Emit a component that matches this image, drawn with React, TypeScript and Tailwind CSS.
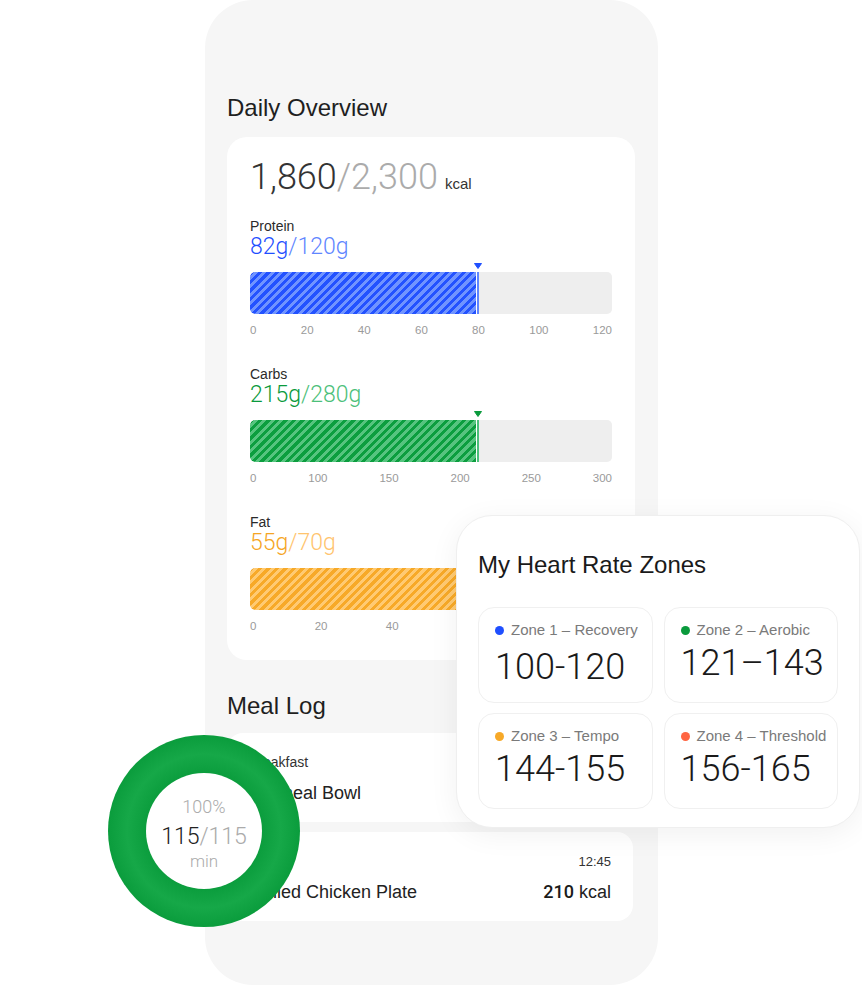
import React from "react";

type Macro = {
  label: string;
  value: string;
  total: string;
  valueCls: string;
  totalCls: string;
  stripeCls: string;
  lineCls: string;
  tri: string;
  fill: number;
  ticks: string[];
};

const macros: Macro[] = [
  {
    label: "Protein",
    value: "82g",
    total: "/120g",
    valueCls: "text-[#1f4fff]",
    totalCls: "text-[#5f86ff]",
    stripeCls:
      "bg-[image:repeating-linear-gradient(135deg,#2352ff_0px,#2352ff_3px,#7094ff_3px,#7094ff_6px)]",
    lineCls: "bg-[#5f86ff]",
    tri: "#1f4fff",
    fill: 226,
    ticks: ["0", "20", "40", "60", "80", "100", "120"],
  },
  {
    label: "Carbs",
    value: "215g",
    total: "/280g",
    valueCls: "text-[#0a9a3c]",
    totalCls: "text-[#4cc07a]",
    stripeCls:
      "bg-[image:repeating-linear-gradient(135deg,#0c9e3f_0px,#0c9e3f_3px,#56c47f_3px,#56c47f_6px)]",
    lineCls: "bg-[#4cc07a]",
    tri: "#0a9a3c",
    fill: 226,
    ticks: ["0", "100", "150", "200", "250", "300"],
  },
  {
    label: "Fat",
    value: "55g",
    total: "/70g",
    valueCls: "text-[#f5a524]",
    totalCls: "text-[#ffc46e]",
    stripeCls:
      "bg-[image:repeating-linear-gradient(135deg,#f7a928_0px,#f7a928_3px,#ffca72_3px,#ffca72_6px)]",
    lineCls: "bg-[#ffc46e]",
    tri: "#f5a524",
    fill: 250,
    ticks: ["0", "20", "40", "60", "70", "80"],
  },
];

function MacroBlock({ m }: { m: Macro }) {
  return (
    <div className="flex flex-col">
      <div className="text-[14px] leading-[16px] text-[#2a2a2a]">{m.label}</div>
      <div className="[font-family:Roboto,sans-serif] font-light text-[23px] leading-[26px]">
        <span className={m.valueCls}>{m.value}</span>
        <span className={m.totalCls}>{m.total}</span>
      </div>
      <div className="relative mt-[12px] h-[42px]">
        <div className="flex h-full w-full overflow-hidden rounded-[5px] bg-[#eeeeee]">
          <div className={`h-full rounded-l-[5px] ${m.stripeCls}`} style={{ width: m.fill }} />
          <div className="h-full w-[1px] bg-white" />
          <div className={`h-full w-[2px] ${m.lineCls}`} />
        </div>
        <svg
          className="absolute top-[-9px]"
          style={{ left: m.fill - 2 }}
          width="8"
          height="6"
          viewBox="0 0 8 6"
        >
          <path d="M0.5 0.5H7.5L4 5.5Z" fill={m.tri} stroke={m.tri} strokeLinejoin="round" />
        </svg>
      </div>
      <div className="mt-[9px] flex justify-between text-[11.5px] leading-[14px] text-[#9a9a9a]">
        {m.ticks.map((t) => (
          <span key={t}>{t}</span>
        ))}
      </div>
    </div>
  );
}

function MealCard({
  label,
  time,
  name,
  kcal,
}: {
  label: string;
  time: string;
  name: string;
  kcal: string;
}) {
  return (
    <div className="rounded-[16px] bg-white pl-[22px] pr-[22px] pt-[20px] pb-[18px]">
      <div className="flex items-baseline justify-between leading-[18px] text-[#333]">
        <span className="text-[14px]">{label}</span>
        <span className="text-[13px]">{time}</span>
      </div>
      <div className="mt-[10px] flex items-baseline justify-between text-[18px] leading-[22px] text-[#222]">
        <span>{name}</span>
        <span>
          <span className="[font-family:Roboto,sans-serif] font-medium text-[#1a1a1a]">{kcal}</span> kcal
        </span>
      </div>
    </div>
  );
}

type Zone = { dot: string; label: string; range: string; extra: string };

const zones: Zone[] = [
  { dot: "bg-[#1f4fff]", label: "Zone 1 – Recovery", range: "100-120", extra: "mt-[8px]" },
  { dot: "bg-[#0a9a3c]", label: "Zone 2 – Aerobic", range: "121–143", extra: "mt-[4px]" },
  { dot: "bg-[#f7a928]", label: "Zone 3 – Tempo", range: "144-155", extra: "mt-[4px]" },
  { dot: "bg-[#ff6542]", label: "Zone 4 – Threshold", range: "156-165", extra: "mt-[4px]" },
];

export default function App() {
  return (
    <div className="relative h-[986px] w-[862px] overflow-hidden bg-white [font-family:'Liberation_Sans',Arial,sans-serif]">
      {/* Phone */}
      <div className="ml-[205px] h-[985px] w-[453px] rounded-[48px] bg-[#f6f6f6] pl-[22px] pr-[23px] pt-[94px]">
        <h1 className="text-[24px] leading-[28px] text-[#1f1f1f]">Daily Overview</h1>
        <div className="mt-[15px] rounded-[20px] bg-white px-[23px] pt-[20px] pb-[27px]">
          <div className="flex h-[40px] items-baseline">
            <span className="[font-family:Roboto,sans-serif] font-light text-[36px] leading-[40px] text-[#333]">
              1,860
            </span>
            <span className="[font-family:Roboto,sans-serif] font-light text-[36px] leading-[40px] text-[#ababab]">
              /2,300
            </span>
            <span className="ml-[7px] text-[15px] text-[#333]">kcal</span>
          </div>
          <div className="mt-[21px] flex flex-col gap-[29px]">
            {macros.map((m) => (
              <MacroBlock key={m.label} m={m} />
            ))}
          </div>
        </div>
        <h2 className="mt-[32px] text-[24px] leading-[28px] text-[#1f1f1f]">Meal Log</h2>
        <div className="mt-[13px] mr-[2px] flex flex-col gap-[10px]">
          <MealCard label="Breakfast" time="08:30" name="Oatmeal Bowl" kcal="320" />
          <MealCard label="Lunch" time="12:45" name="Grilled Chicken Plate" kcal="210" />
        </div>
      </div>

      {/* Heart rate card */}
      <div className="absolute left-[456px] top-[515px] h-[313px] w-[404px] rounded-[36px] border border-[#efefef] bg-white pl-[21px] pr-[21px] pt-[35px] shadow-[0_6px_30px_rgba(0,0,0,0.06)]">
        <div className="text-[24px] leading-[28px] text-[#1a1a1a]">My Heart Rate Zones</div>
        <div className="mt-[28px] grid grid-cols-2 gap-x-[11px] gap-y-[10px]">
          {zones.map((z) => (
            <div
              key={z.label}
              className="h-[96px] rounded-[16px] border border-[#f0f0f0] pl-[16px] pt-[13px]"
            >
              <div className="flex items-center gap-[7px] text-[15px] leading-[18px] text-[#7a7a7a]">
                <span className={`h-[9px] w-[9px] rounded-full ${z.dot}`} />
                <span>{z.label}</span>
              </div>
              <div
                className={`[font-family:Roboto,sans-serif] font-light text-[36px] leading-[40px] text-[#1a1a1a] ${z.extra}`}
              >
                {z.range}
              </div>
            </div>
          ))}
        </div>
      </div>

      {/* Ring */}
      <div className="absolute left-[108px] top-[735px] flex h-[192px] w-[192px] items-center justify-center rounded-full bg-[image:radial-gradient(circle_closest-side,#0b9d3d_60%,#16a848_80%,#0b9d3d_99%,#0b9d3d_100%)]">
        <div className="flex h-[116px] w-[116px] flex-col items-center justify-center rounded-full bg-white pt-[5px] [font-family:Roboto,sans-serif] font-light">
          <div className="text-[18px] leading-[20px] text-[#ababab]">100%</div>
          <div className="mt-[6px] text-[23px] leading-[28px]">
            <span className="text-[#222]">115</span>
            <span className="text-[#ababab]">/115</span>
          </div>
          <div className="text-[17px] leading-[20px] text-[#ababab]">min</div>
        </div>
      </div>
    </div>
  );
}
